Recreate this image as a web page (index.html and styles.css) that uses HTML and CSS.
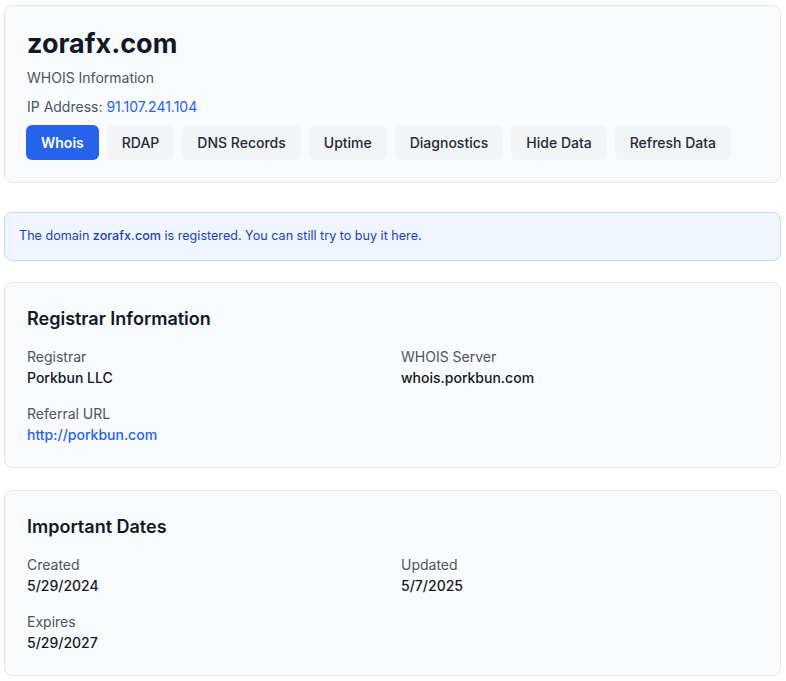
FILE: index.html
```html
<!DOCTYPE html>
<html lang="en">
<head>
    <meta charset="UTF-8">
    <meta name="viewport" content="width=device-width, initial-scale=1.0">
    <title>zorafx.com - WHOIS</title>
    <link rel="stylesheet" href="styles.css">
</head>
<body>

<div class="page">

    <div class="card header">
        <h1 class="domain">zorafx.com</h1>
        <p class="subtitle">WHOIS Information</p>
        <p class="ip">IP Address: <a href="#">91.107.241.104</a></p>
        <div class="tabs">
            <button class="tab active">Whois</button>
            <button class="tab">RDAP</button>
            <button class="tab">DNS Records</button>
            <button class="tab">Uptime</button>
            <button class="tab">Diagnostics</button>
            <button class="tab">Hide Data</button>
            <button class="tab">Refresh Data</button>
        </div>
    </div>

    <div class="notice">
        The domain <span class="strong">zorafx.com</span> is registered. You can still try to buy it here.
    </div>

    <div class="card section">
        <h2 class="section-title">Registrar Information</h2>
        <div class="fields">
            <div class="field">
                <div class="label">Registrar</div>
                <div class="value">Porkbun LLC</div>
            </div>
            <div class="field">
                <div class="label">WHOIS Server</div>
                <div class="value">whois.porkbun.com</div>
            </div>
            <div class="field">
                <div class="label">Referral URL</div>
                <div class="value"><a href="#">http://porkbun.com</a></div>
            </div>
        </div>
    </div>

    <div class="card section">
        <h2 class="section-title">Important Dates</h2>
        <div class="fields">
            <div class="field">
                <div class="label">Created</div>
                <div class="value">5/29/2024</div>
            </div>
            <div class="field">
                <div class="label">Updated</div>
                <div class="value">5/7/2025</div>
            </div>
            <div class="field">
                <div class="label">Expires</div>
                <div class="value">5/29/2027</div>
            </div>
        </div>
    </div>

</div>

</body>
</html>
```

FILE: styles.css
```css
/* whois page */
body {
    margin: 0;
    background-color: #ffffff;
    font-family: Inter, "Noto Sans", sans-serif;
    color: #111827;
}

.page {
    padding: 5px 5px 0 4px;
}

.card {
    background-color: #f9fafb;
    border: 1px solid #e5e7eb;
    border-radius: 8px;
    padding: 22px 21px 22px 22px;
    margin-bottom: 22px;
}

.domain {
    margin: 0;
    font-size: 27px;
    line-height: 32px;
    font-weight: 700;
    color: #111827;
}

.subtitle,
.ip {
    margin: 0;
    font-size: 14px;
    line-height: 20px;
    color: #4b5563;
}

.subtitle {
    margin-top: 8px;
}

.ip {
    margin-top: 9px;
}

.ip a {
    color: #2563eb;
    text-decoration: none;
}

.tabs {
    display: flex;
    gap: 8px;
    margin-top: 8px;
    margin-left: -1px;
}

.tab {
    font-family: inherit;
    font-size: 14px;
    font-weight: 500;
    line-height: 19px;
    padding: 8px 15px;
    border: none;
    border-radius: 6px;
    background-color: #f3f4f6;
    color: #1f2937;
}

.tab.active {
    background-color: #2563eb;
    color: #ffffff;
    font-weight: 600;
}

/* blue info box */
.notice {
    background-color: #eff6ff;
    border: 1px solid #bfdbfe;
    border-radius: 8px;
    padding: 13px 14px 14px 14px;
    margin-top: 29px;
    margin-bottom: 21px;
    font-size: 12.6px;
    line-height: 20px;
    color: #1e40af;
}

.notice .strong {
    font-weight: 500;
}

.section-title {
    margin: 0 0 14px 0;
    font-size: 18px;
    line-height: 28px;
    font-weight: 600;
    color: #111827;
}

.fields {
    display: grid;
    grid-template-columns: 1fr 1fr;
    column-gap: 16px;
    row-gap: 16px;
}

.label {
    font-size: 14px;
    line-height: 20px;
    color: #4b5563;
}

.value {
    font-size: 14px;
    line-height: 20px;
    font-weight: 500;
    color: #111827;
    margin-top: 1px;
}

.value a {
    color: #2563eb;
    text-decoration: none;
}
```
